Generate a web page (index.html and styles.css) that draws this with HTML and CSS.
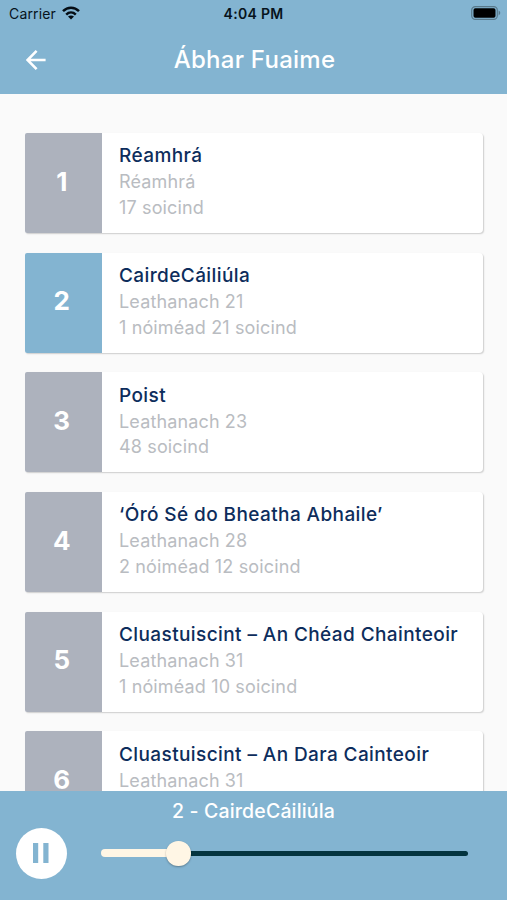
FILE: index.html
```html
<!DOCTYPE html>
<html lang="ga">
<head>
<meta charset="utf-8">
<title>Ábhar Fuaime</title>
<link rel="stylesheet" href="styles.css">
</head>
<body>
<div class="app">
  <header class="header">
    <div class="status">
      <div class="carrier"><span>Carrier</span>
        <svg class="wifi" width="18" height="14" viewBox="0 0 18 14"><g fill="none" stroke="#050d14" stroke-width="2.5"><path d="M1 5.2C5.6.6 12.4.6 17 5.2"/><path d="M4.2 8.6c2.8-2.7 6.8-2.7 9.6 0"/></g><path fill="#050d14" d="M9 13.6 6 10.5c1.7-1.5 4.3-1.5 6 0z"/></svg>
      </div>
      <div class="time">4:04 PM</div>
      <svg class="battery" width="30" height="14" viewBox="0 0 30 14"><rect x=".7" y=".6" width="25.6" height="12.8" rx="3.6" fill="none" stroke="#58798b" stroke-width="1.2"/><rect x="2.5" y="2.3" width="22" height="9.4" rx="1.8" fill="#000"/><path d="M27.6 4.6c2.2 1 2.2 3.8 0 4.8z" fill="#58798b"/></svg>
    </div>
    <div class="nav">
      <svg class="back" width="20" height="20" viewBox="0 0 20 20"><path d="M19.6 10H1.8M10.6 .9 1.5 10l9.1 9.1" fill="none" stroke="#fff" stroke-width="2.6"/></svg>
      <h1>Ábhar Fuaime</h1>
    </div>
  </header>
  <main class="list">
    <article class="card"><div class="num">1</div><div class="info"><h2>Réamhrá</h2><p>Réamhrá</p><p>17 soicind</p></div></article>
    <article class="card active"><div class="num">2</div><div class="info"><h2>CairdeCáiliúla</h2><p>Leathanach 21</p><p>1 nóiméad 21 soicind</p></div></article>
    <article class="card"><div class="num">3</div><div class="info"><h2>Poist</h2><p>Leathanach 23</p><p>48 soicind</p></div></article>
    <article class="card"><div class="num">4</div><div class="info"><h2>‘Óró Sé do Bheatha Abhaile’</h2><p>Leathanach 28</p><p>2 nóiméad 12 soicind</p></div></article>
    <article class="card"><div class="num">5</div><div class="info"><h2>Cluastuiscint – An Chéad Chainteoir</h2><p>Leathanach 31</p><p>1 nóiméad 10 soicind</p></div></article>
    <article class="card"><div class="num">6</div><div class="info"><h2>Cluastuiscint – An Dara Cainteoir</h2><p>Leathanach 31</p></div></article>
  </main>
  <footer class="player">
    <div class="now">2 - CairdeCáiliúla</div>
    <div class="controls">
      <div class="pause"><svg width="16" height="20" viewBox="0 0 16 20"><path d="M0 0h5.2v20H0zM10.3 0h5.2v20h-5.2z" fill="#83b4d1"/></svg></div>
      <div class="track"><div class="played"></div><div class="thumb"></div><div class="rest"></div></div>
    </div>
  </footer>
</div>
</body>
</html>
```
FILE: styles.css
```css
* { box-sizing: border-box; margin: 0; padding: 0; }
body { font-family: Inter, "Liberation Sans", sans-serif; background: #fafafa; overflow: hidden; }
.app { width: 507px; height: 900px; display: flex; flex-direction: column; overflow: hidden; }
.header { height: 94px; flex: none; background: #83b4d1; }
.status { height: 27px; display: grid; grid-template-columns: 1fr auto 1fr; color: #07131c; }
.carrier { display: flex; gap: 6px; padding-left: 9px; font-size: 14px; line-height: 27px; letter-spacing: 0.15px; }
.wifi { margin-top: 6px; }
.time { font-size: 14px; font-weight: 600; line-height: 28px; letter-spacing: 0.3px; }
.battery { justify-self: end; margin: 6px 6px 0 0; }
.nav { height: 65px; display: grid; grid-template-columns: 46px 1fr 46px; align-items: center; }
.back { margin-left: 25.5px; }
.nav h1 { text-align: center; font-size: 24px; line-height: 30px; font-weight: 500; color: #fff; letter-spacing: 0.25px; padding-left: 2px; }
.list { flex: 1; min-height: 0; overflow: hidden; display: flex; flex-direction: column; gap: 19.7px; padding: 39px 25px 0; }
.card { flex: none; height: 100px; width: 457.5px; display: flex; background: #fff; border-radius: 4px; overflow: hidden; box-shadow: 1px 1px 1.5px rgba(0, 0, 0, 0.18); }
.card:first-child, .card { border-top-left-radius: 2px; border-bottom-left-radius: 2px; }
.num { width: 76.5px; background: #adb2bd; color: #fff; font-size: 26px; font-weight: 700; display: flex; align-items: center; justify-content: center; padding: 0 3px 4px 0; }
.active .num { background: #83b4d1; }
.info { padding: 10.3px 0 0 17.5px; white-space: nowrap; }
.info h2 { font-size: 19px; line-height: 26px; font-weight: 500; color: #0d2d5c; letter-spacing: 0.4px; }
.info p { font-size: 18px; line-height: 25.7px; color: #b9bcc1; letter-spacing: 0.14px; }
.player { height: 109.5px; flex: none; background: #83b4d1; padding-top: 7.5px; }
.now { text-align: center; color: #fff; font-size: 19.5px; line-height: 26px; font-weight: 500; letter-spacing: 0.15px; }
.controls { display: flex; align-items: center; gap: 34px; padding: 3.5px 39px 0 15.5px; }
.pause { width: 51.5px; height: 51.5px; border-radius: 50%; background: #fff; display: flex; align-items: center; justify-content: center; }
.track { flex: 1; display: flex; align-items: center; }
.played { width: 66px; height: 8px; border-radius: 4px 0 0 4px; background: #fff6e5; }
.thumb { width: 24.5px; height: 24.5px; margin: 0 -1px; border-radius: 50%; background: #fff6e5; box-shadow: 0 1px 2px rgba(0, 0, 0, 0.3); z-index: 1; }
.rest { flex: 1; height: 5px; border-radius: 0 3px 3px 0; background: #04343f; }
```
